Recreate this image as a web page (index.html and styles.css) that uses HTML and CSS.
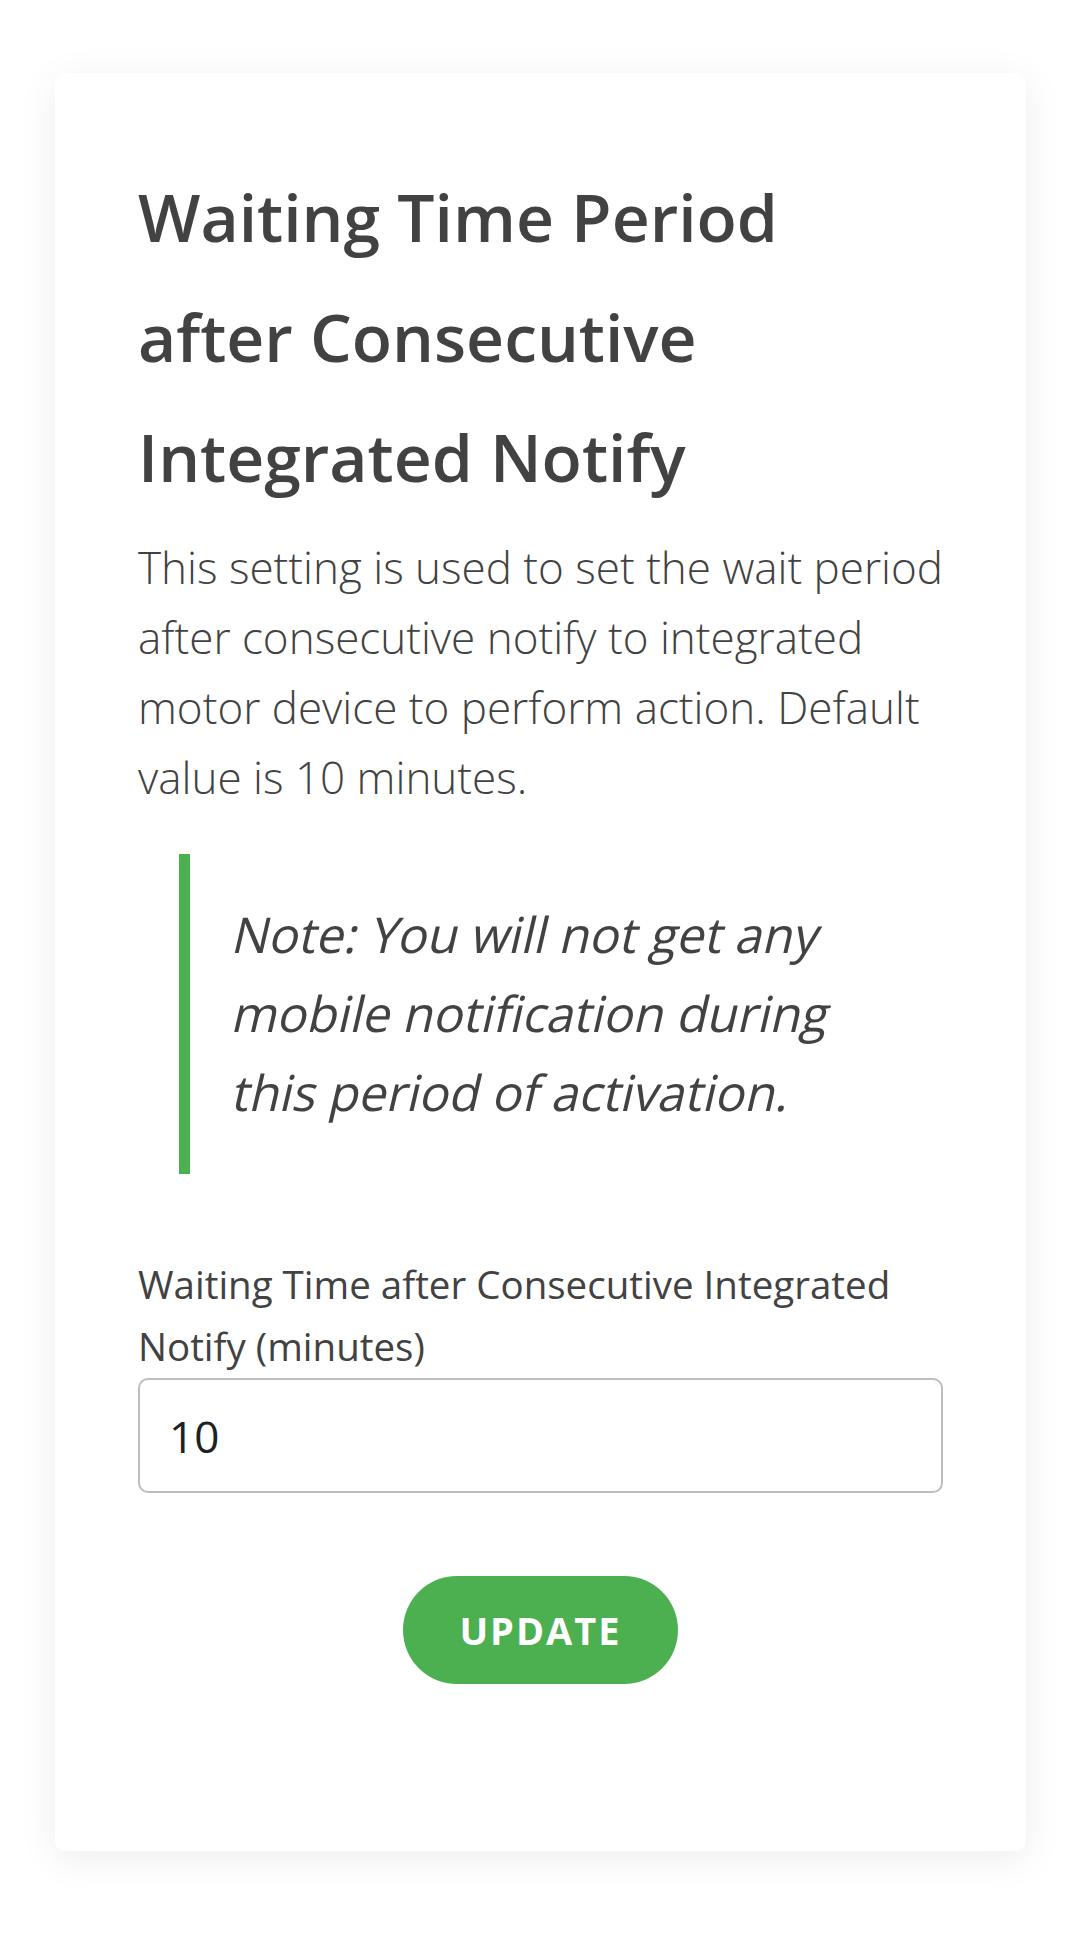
FILE: index.html
```html
<!DOCTYPE html>
<html lang="en">
<head>
<meta charset="utf-8">
<title>Waiting Time Period</title>
<link rel="stylesheet" href="styles.css">
</head>
<body>
  <main class="card">
    <h1 class="title">Waiting Time Period after Consecutive Integrated Notify</h1>
    <p class="desc">This setting is used to set the wait period after consecutive notify to integrated motor device to perform action. Default value is 10 minutes.</p>
    <blockquote class="note">
      <span class="note-line">Note: You will not get any</span>
      <span class="note-line">mobile notification during</span>
      <span class="note-line">this period of activation.</span>
    </blockquote>
    <form class="form">
      <label class="label" for="wait">Waiting Time after Consecutive Integrated Notify (minutes)</label>
      <input class="input" id="wait" type="text" value="10">
      <div class="actions">
        <button class="btn" type="button">UPDATE</button>
      </div>
    </form>
  </main>
</body>
</html>
```
FILE: styles.css
```css
html, body {
  margin: 0;
  padding: 0;
  background: #ffffff;
}
body {
  font-family: "Open Sans", "Noto Sans", sans-serif;
  color: #424242;
  padding: 73px 54px 90px 55px;
}
.card {
  background: #fff;
  border-radius: 10px;
  box-shadow: 0 8px 40px rgba(0, 0, 0, 0.07);
  padding: 83px 83px 167px 83px;
}
.title {
  margin: 0;
  font-size: 66px;
  font-weight: 600;
  line-height: 120px;
  color: #424242;
  padding-right: 80px;
}
.desc {
  margin: 16px -12px 0 0;
  font-size: 44px;
  font-weight: 300;
  line-height: 70px;
  color: #424242;
}
.note {
  margin: 42px 0 0 41px;
  border-left: 11px solid #4caf50;
  padding: 41px 40px 42px 40px;
  font-size: 49.5px;
  line-height: 79px;
  color: #424242;
}
.note-line {
  display: block;
  white-space: nowrap;
  transform: skewX(-13deg);
  transform-origin: 0 58px;
}
.form {
  margin: 80px 0 0;
  display: flex;
  flex-direction: column;
}
.label {
  font-size: 38.5px;
  line-height: 61.5px;
  color: #424242;
}
.input {
  margin-top: 1px;
  box-sizing: border-box;
  height: 115px;
  width: 100%;
  border: 2px solid #bdbdbd;
  border-radius: 10px;
  padding: 0 29px;
  font-family: "Open Sans", "Noto Sans", sans-serif;
  font-size: 44px;
  color: #212121;
  background: #fff;
  outline: none;
}
.actions {
  display: flex;
  justify-content: center;
  margin-top: 83px;
}
.btn {
  width: 275px;
  height: 108px;
  border: none;
  border-radius: 54px;
  background: #4caf50;
  color: #fff;
  font-family: "Open Sans", "Noto Sans", sans-serif;
  font-size: 38px;
  font-weight: 700;
  letter-spacing: 2px;
  cursor: pointer;
}
```
